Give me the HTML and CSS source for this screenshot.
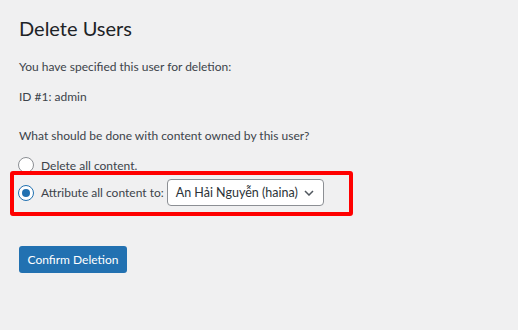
FILE: index.html
```html
<!DOCTYPE html>
<html lang="vi">
<head>
    <meta charset="UTF-8">
    <title>Delete Users</title>
    <link rel="stylesheet" href="styles.css">
</head>
<body>
    <div class="wrap">
        <h1>Delete Users</h1>
        <p class="line first">You have specified this user for deletion:</p>
        <p class="line id">ID #1: admin</p>
        <p class="line question">What should be done with content owned by this user?</p>
        <label class="choice">
            <input type="radio" name="delete_option">
            <span>Delete all content.</span>
        </label>
        <div class="choice attribute">
            <input type="radio" name="delete_option" checked>
            <span>Attribute all content to:</span>
            <div class="select">
                <span>An Hải Nguyễn (haina)</span>
                <svg width="10" height="6" viewBox="0 0 10 6"><path d="M1 1 L5 5 L9 1" fill="none" stroke="#50575e" stroke-width="1.5"/></svg>
            </div>
        </div>
        <button class="confirm">Confirm Deletion</button>
    </div>
</body>
</html>
```
FILE: styles.css
```css
*, *::before, *::after{
    margin: 0;
    padding: 0;
    box-sizing: border-box;
}
body{
    background: #f0f0f1;
    font-family: Lato, "Noto Sans", sans-serif;
    font-size: 12px;
    color: #3c434a;
}
.wrap{
    padding: 0 19px;
}
h1{
    font-size: 20px;
    font-weight: 400;
    line-height: 30px;
    margin-top: 13px;
    color: #1d2327;
}
.line{
    line-height: 20px;
}
.first{margin-top: 14px;}
.id{margin-top: 10px;}
.question{margin-top: 19px;}
.choice{
    display: flex;
    align-items: center;
    gap: 7px;
    height: 20px;
    margin-top: 9px;
}
.choice input{
    appearance: none;
    flex: none;
    width: 16px;
    height: 16px;
    border: 1px solid #8c8f94;
    border-radius: 50%;
    background: #fff;
    margin-left: -1px;
    position: relative;
}
.choice input:checked{
    border-color: #2271b1;
}
.choice input:checked::before{
    content: "";
    position: absolute;
    left: 3px;
    top: 3px;
    width: 8px;
    height: 8px;
    border-radius: 50%;
    background: #2271b1;
}
.attribute{
    height: 27px;
    margin-top: 4px;
    position: relative;
}
.attribute::after{
    content: "";
    position: absolute;
    left: -9px;
    top: -8px;
    width: 343px;
    height: 45px;
    border: 4px solid #ff0000;
    border-radius: 3px;
}
.select{
    display: flex;
    align-items: center;
    justify-content: space-between;
    width: 157px;
    height: 27px;
    margin-left: -4px;
    padding: 0 9px 0 8px;
    background: #fff;
    border: 1px solid #8c8f94;
    border-radius: 4px;
    font-size: 12.5px;
    color: #2c3338;
    white-space: nowrap;
}
.confirm{
    display: block;
    margin-top: 40px;
    width: 108px;
    height: 27px;
    background: #2271b1;
    border: none;
    border-radius: 3px;
    color: #fff;
    font-family: Lato, "Noto Sans", sans-serif;
    font-size: 12px;
}
```
